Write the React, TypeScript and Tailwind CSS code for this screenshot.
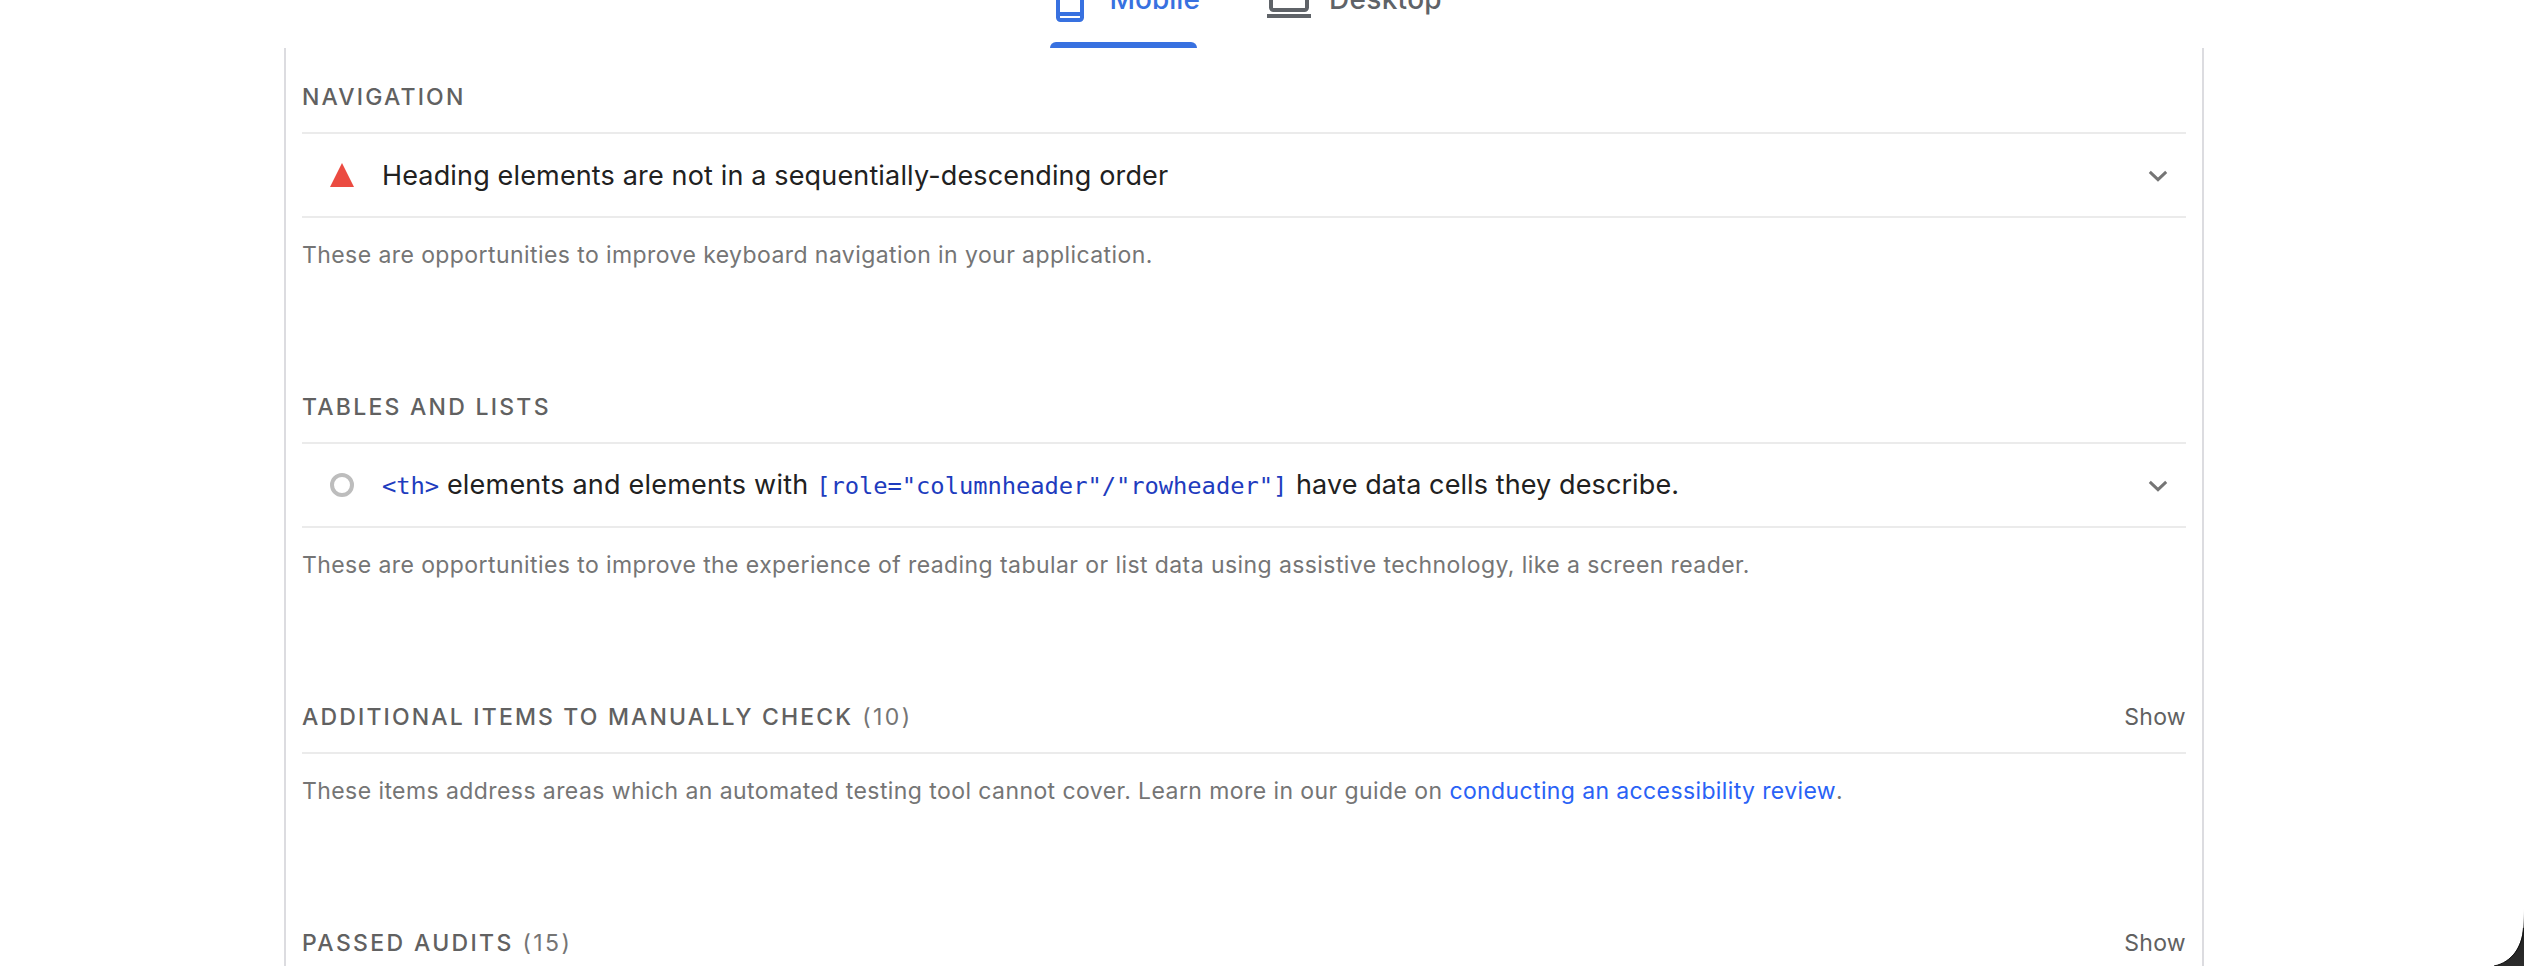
import type { ReactNode } from "react";

function PhoneIcon() {
  return (
    <svg width="28" height="44" viewBox="0 0 28 44" fill="none" className="block shrink-0 text-[#3871e0]">
      <rect x="2" y="2" width="24" height="40" rx="2.5" stroke="currentColor" strokeWidth="4" />
      <path d="M3 8H25M3 36H25" stroke="currentColor" strokeWidth="4" />
    </svg>
  );
}

function LaptopIcon() {
  return (
    <svg width="44" height="36" viewBox="0 0 44 36" fill="none" className="block shrink-0 text-[#5f6368]">
      <rect x="4" y="2" width="36" height="26" rx="2.5" stroke="currentColor" strokeWidth="4" />
      <rect x="0" y="32" width="44" height="4" fill="currentColor" />
    </svg>
  );
}

function Chevron() {
  return (
    <svg width="20" height="14" viewBox="0 0 20 14" fill="none" className="mr-[18px] mt-0.5 block">
      <path d="M1.8 2.9L10 10.6L18.2 2.9" stroke="#757575" strokeWidth="3" />
    </svg>
  );
}

function FailIcon() {
  return (
    <svg width="24" height="24" viewBox="0 0 24 24" className="block">
      <path d="M12 0L24 24H0Z" fill="#eb4b41" />
    </svg>
  );
}

function Heading({ children, count }: { children: ReactNode; count?: number }) {
  return (
    <div className="flex h-[72px] items-center justify-between border-b-2 border-[#ebebeb] text-[23px] leading-[30px]">
      <div className="whitespace-pre font-medium tracking-[2.16px] text-[#616161]">
        {children}
        {count !== undefined && <span className="font-normal tracking-[2.4px] text-[#757575]"> ({count})</span>}
      </div>
      {count !== undefined && <div className="tracking-[0.3px] text-[#616161]">Show</div>}
    </div>
  );
}

function Audit({ icon, children }: { icon: ReactNode; children: ReactNode }) {
  return (
    <div className="flex h-[84px] items-center border-b-2 border-[#ebebeb] pl-7">
      {icon}
      <div className="ml-7 flex-1 whitespace-pre text-[27px] leading-[37px] tracking-[0.15px] text-[#212121]">
        {children}
      </div>
      <Chevron />
    </div>
  );
}

function Description({ children }: { children: ReactNode }) {
  return (
    <p className="flex h-[73px] items-center whitespace-pre text-[23px] leading-[30px] tracking-[0.42px] text-[#757575]">
      {children}
    </p>
  );
}

function Code({ children }: { children: ReactNode }) {
  return (
    <code className="font-['DejaVu_Sans_Mono',monospace] text-[23.8px] leading-none tracking-[-0.05px] text-[#1e3cbe]">
      {children}
    </code>
  );
}

export default function App() {
  return (
    <div className="relative flex h-[966px] w-[2524px] flex-col overflow-hidden bg-white font-['Inter',sans-serif]">
      <header className="flex h-[48px] shrink-0 items-end overflow-hidden pl-[1050px]">
        <div className="flex w-[147px] flex-col">
          <div className="mb-5 flex items-end pl-1.5">
            <PhoneIcon />
            <span className="mb-[5px] ml-[25.5px] text-[28px] font-medium leading-[36px] text-[#3871e0]">Mobile</span>
          </div>
          <div className="h-[6px] rounded-t-[6px] bg-[#3871e0]" />
        </div>
        <div className="mb-[30px] ml-[70px] flex items-end">
          <LaptopIcon />
          <span className="mb-px ml-[18px] text-[28px] font-medium leading-[36px] tracking-[0.3px] text-[#5f6368]">
            Desktop
          </span>
        </div>
      </header>

      <main className="ml-[284px] flex w-[1920px] flex-1 flex-col gap-[81px] overflow-hidden border-x-2 border-[#dcdce0] px-4 pt-[14px]">
        <section className="shrink-0">
          <Heading>NAVIGATION</Heading>
          <Audit icon={<FailIcon />}>
            <div className="pt-px">Heading elements are not in a sequentially-descending order</div>
          </Audit>
          <Description>These are opportunities to improve keyboard navigation in your application.</Description>
        </section>

        <section className="shrink-0">
          <Heading>
            <span className="tracking-[2.25px]">TABLES AND LISTS</span>
          </Heading>
          <Audit icon={<div className="size-6 rounded-full border-4 border-[#bdbdbd]" />}>
            <div className="pb-px">
              <Code>{"<th>"}</Code>
              <span className="tracking-[0.2px]"> elements and elements with </span>
              <Code>{'[role="columnheader"/"rowheader"]'}</Code>
              <span className="ml-px tracking-[0.1px]"> have data cells they describe.</span>
            </div>
          </Audit>
          <Description>
            These are opportunities to improve the experience of reading tabular or list data using assistive technology, like a screen reader.
          </Description>
        </section>

        <section className="shrink-0">
          <Heading count={10}>ADDITIONAL ITEMS TO MANUALLY CHECK</Heading>
          <Description>
            {"These items address areas which an automated testing tool cannot cover. Learn more in our guide on "}
            <a className="tracking-[0.38px] text-[#2962f6]">conducting an accessibility review</a>.
          </Description>
        </section>

        <section className="shrink-0">
          <Heading count={15}>
            <span className="tracking-[2.35px]">PASSED AUDITS</span>
          </Heading>
        </section>
      </main>

      <svg width="40" height="66" viewBox="0 0 40 66" className="absolute bottom-0 right-0">
        <defs>
          <linearGradient id="edge" x1="0" y1="0" x2="0" y2="1">
            <stop offset="0" stopColor="#555" stopOpacity="0" />
            <stop offset="0.4" stopColor="#222" />
            <stop offset="1" stopColor="#2b2b2b" />
          </linearGradient>
        </defs>
        <path d="M40 8L39.4 22C39.4 46 28 62.5 10 66H40Z" fill="url(#edge)" />
        <path d="M39.4 28C39 46 28 62.5 10 66" fill="none" stroke="#111" strokeWidth="1" />
      </svg>
    </div>
  );
}
